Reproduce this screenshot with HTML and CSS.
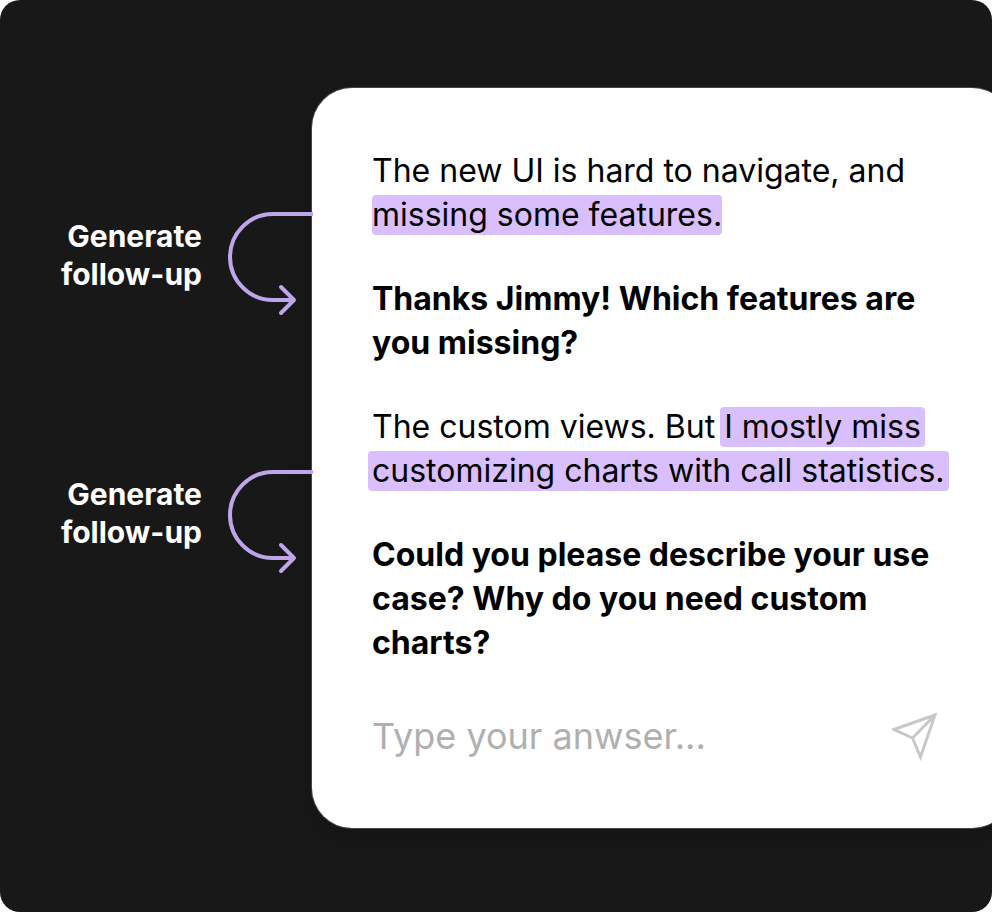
FILE: index.html
```html
<!DOCTYPE html>
<html lang="en">
<head>
    <meta charset="UTF-8">
    <meta name="viewport" content="width=device-width, initial-scale=1.0">
    <title>Generate follow-up</title>
    <link rel="stylesheet" href="styles.css">
</head>
<body>
    <main class="scene">
        <div class="notes">
            <div class="note">
                <p>Generate<br>follow-up</p>
                <svg class="arrow" viewBox="0 0 84 116" aria-hidden="true">
                    <path d="M85 15H45a43 43 0 0 0 0 86h20"/>
                    <path class="arrow-head" d="M53 88l13 13-13 13"/>
                </svg>
            </div>
            <div class="note">
                <p>Generate<br>follow-up</p>
                <svg class="arrow" viewBox="0 0 84 116" aria-hidden="true">
                    <path d="M85 15H45a43 43 0 0 0 0 86h20"/>
                    <path class="arrow-head" d="M53 88l13 13-13 13"/>
                </svg>
            </div>
        </div>
        <section class="card">
            <p class="answer">The new UI is hard to navigate, and<br><mark class="flush">missing some features.</mark></p>
            <p class="question">Thanks Jimmy! Which features are<br>you missing?</p>
            <p class="answer">The custom views. But <mark>I mostly miss</mark><br><mark>customizing charts with call statistics.</mark></p>
            <p class="question">Could you please describe your use<br>case? Why do you need custom<br>charts?</p>
            <form class="reply">
                <input type="text" placeholder="Type your anwser..." aria-label="Your answer">
                <button type="button" aria-label="Send">
                    <svg viewBox="0 0 48 50" aria-hidden="true">
                        <path d="M43 4L2 18.500l18.500 8.500L28.500 46zM43 4L20.500 27"/>
                    </svg>
                </button>
            </form>
        </section>
    </main>
</body>
</html>
```
FILE: styles.css
```css
* {
    box-sizing: border-box;
}
body {
    margin: 0;
    background-color: white;
    font-family: Inter, sans-serif;
}
p {
    margin: 0;
}
.scene {
    display: grid;
    grid-template-columns: 312px 700px;
    align-items: start;
    min-height: 100vh;
    padding: 88px 0 84px;
    background-color: #181818;
    border-radius: 20px;
    overflow: hidden;
}
.notes {
    display: flex;
    flex-direction: column;
    gap: 142px;
    padding-top: 111px;
    position: relative;
    z-index: 1;
}
.note {
    display: flex;
    align-items: center;
    justify-content: flex-end;
    gap: 26px;
    color: white;
    font-size: 30px;
    font-weight: 700;
    line-height: 38px;
    text-align: right;
}
.note p {
    padding-bottom: 4px;
}
.arrow {
    width: 84px;
    height: 116px;
    overflow: visible;
    fill: none;
    stroke: #bfa5ea;
    stroke-width: 4;
}
.arrow-head {
    stroke-linecap: round;
    stroke-linejoin: round;
}
.card {
    display: flex;
    flex-direction: column;
    gap: 40px;
    padding: 61px 72px 61px 60px;
    background-color: white;
    border-radius: 40px;
    box-shadow: 0 0 0 1px #444, 0 12px 24px rgba(0, 0, 0, 0.15);
    color: black;
    font-size: 32px;
    line-height: 44px;
    white-space: nowrap;
}
.question {
    font-weight: 700;
}
mark {
    margin: 0 -4px;
    padding: 0 4px 1px;
    background-color: #dabfff;
    border-radius: 4px;
    color: inherit;
}
mark.flush {
    margin: 0;
    padding: 0 0 1px;
}
.reply {
    display: flex;
    align-items: center;
    justify-content: space-between;
}
.reply input {
    flex: 1;
    min-width: 0;
    height: 62px;
    padding: 0;
    border: 0;
    outline: 0;
    background: none;
    color: black;
    font: 400 36px Inter, sans-serif;
}
.reply input::placeholder {
    color: #b0b0b0;
    opacity: 1;
}
.reply button {
    display: flex;
    padding: 0;
    border: 0;
    background: none;
    cursor: pointer;
}
.reply svg {
    width: 48px;
    height: 50px;
    fill: none;
    stroke: #c8c8c8;
    stroke-width: 3;
}
```
